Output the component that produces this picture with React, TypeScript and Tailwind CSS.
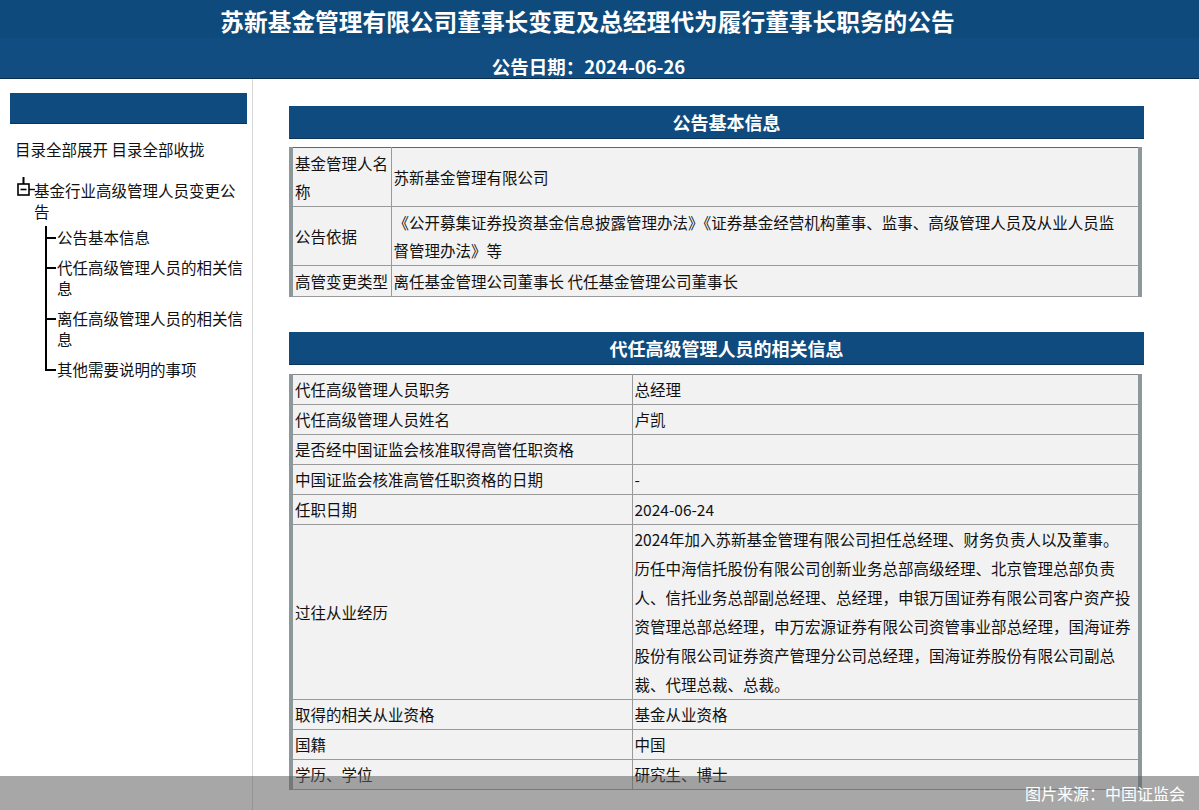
import React from "react";

const FONT = { fontFamily: '"Noto Sans CJK SC", "Noto Sans", sans-serif' };

function SectionHeader({ title }: { title: string }) {
  return (
    <div className="h-[33px] w-[855px] bg-[#0f4b7e] border-b border-[#0a3459] flex items-center justify-center pl-[20px] text-white font-bold text-[18px] leading-[24px]">
      {title}
    </div>
  );
}

function TreeIcon() {
  return (
    <svg width="18" height="20" viewBox="0 0 18 20" className="shrink-0">
      <line x1="6.5" y1="0" x2="6.5" y2="7" stroke="#000" strokeWidth="2" />
      <rect x="1" y="7" width="11" height="11" fill="#fff" stroke="#000" strokeWidth="1.6" />
      <line x1="3.5" y1="12.5" x2="9.5" y2="12.5" stroke="#000" strokeWidth="1.6" />
      <line x1="12" y1="12.5" x2="18" y2="12.5" stroke="#000" strokeWidth="1.4" />
    </svg>
  );
}

const children = [
  "公告基本信息",
  "代任高级管理人员的相关信息",
  "离任高级管理人员的相关信息",
  "其他需要说明的事项",
];

function Sidebar() {
  return (
    <div className="w-[253px] shrink-0 border-r border-[#d6d6d6] pt-[14px] text-[15.5px] text-[#111]">
      <div className="ml-[10px] w-[237px] h-[31px] bg-[#0f4b7e] border-b border-[#0a3459]" />
      <div className="ml-[15px] mt-[14px] leading-[22px]">目录全部展开 目录全部收拢</div>
      <div className="mt-[17px] ml-[17px] flex items-start">
        <TreeIcon />
        <div className="leading-[21px] mt-[3px] w-[212px] -ml-px">基金行业高级管理人员变更公告</div>
      </div>
      <div className="ml-[45px] mt-[4px] relative">
        <div className="absolute left-0 top-0 bottom-[9px] w-[2px] bg-black" />
        {children.map((c, i) => (
          <div key={i} className="relative pl-[12px] pt-px leading-[21px] mb-[8px] w-[200px]">
            <div className="absolute left-0 top-[11px] w-[11px] h-[1.5px] bg-black" />
            {c}
          </div>
        ))}
      </div>
    </div>
  );
}

const cell = "border border-[#9a9a9a] bg-[#f2f2f2] px-[2px] py-px align-middle text-left font-normal";

function Table1() {
  return (
    <table className="w-[853px] border-collapse border-l-[4px] border-r-[4px] border-l-[#8d989d] border-r-[#8d989d] border-t border-t-[#666] border-b border-b-[#9a9a9a] text-[15.5px] text-[#111] leading-[28px]">
      <tbody>
        <tr>
          <td className={cell + " w-[100px] border-t-[#666]"}>基金管理人名称</td>
          <td className={cell + " border-t-[#666]"}>苏新基金管理有限公司</td>
        </tr>
        <tr>
          <td className={cell + " border-t-[#555]"}>公告依据</td>
          <td className={cell + " border-t-[#555]"}>
            《公开募集证券投资基金信息披露管理办法》《证券基金经营机构董事、监事、高级管理人员及从业人员监
            <br />
            督管理办法》等
          </td>
        </tr>
        <tr>
          <td className={cell + " border-t-[#555] whitespace-nowrap"}>高管变更类型</td>
          <td className={cell + " border-t-[#555]"}>离任基金管理公司董事长 代任基金管理公司董事长</td>
        </tr>
      </tbody>
    </table>
  );
}

const rows2: [string, string][] = [
  ["代任高级管理人员职务", "总经理"],
  ["代任高级管理人员姓名", "卢凯"],
  ["是否经中国证监会核准取得高管任职资格", ""],
  ["中国证监会核准高管任职资格的日期", "-"],
  ["任职日期", "2024-06-24"],
];

const rows3: [string, string][] = [
  ["取得的相关从业资格", "基金从业资格"],
  ["国籍", "中国"],
  ["学历、学位", "研究生、博士"],
];

const history = [
  "2024年加入苏新基金管理有限公司担任总经理、财务负责人以及董事。",
  "历任中海信托股份有限公司创新业务总部高级经理、北京管理总部负责",
  "人、信托业务总部副总经理、总经理，申银万国证券有限公司客户资产投",
  "资管理总部总经理，申万宏源证券有限公司资管事业部总经理，国海证券",
  "股份有限公司证券资产管理分公司总经理，国海证券股份有限公司副总",
  "裁、代理总裁、总裁。",
];

function Table2() {
  return (
    <table className="w-[853px] border-collapse border-l-[4px] border-r-[4px] border-l-[#8d989d] border-r-[#8d989d] border-t border-t-[#666] text-[15.5px] text-[#111] leading-[27px]">
      <tbody>
        {rows2.map(([k, v], i) => (
          <tr key={i}>
            <td className={cell + " w-[341px] border-t-[#888]"}>{k}</td>
            <td className={cell + " border-t-[#888]"}>{v}</td>
          </tr>
        ))}
        <tr>
          <td className={cell + " border-t-[#888]"}>过往从业经历</td>
          <td className={cell + " border-t-[#888] leading-[29px] !py-0 whitespace-nowrap"}>
            {history.map((l, i) => (
              <div key={i}>{l}</div>
            ))}
          </td>
        </tr>
        {rows3.map(([k, v], i) => (
          <tr key={i}>
            <td className={cell + " border-t-[#888]"}>{k}</td>
            <td className={cell + " border-t-[#888]"}>{v}</td>
          </tr>
        ))}
      </tbody>
    </table>
  );
}

export default function App() {
  return (
    <div className="relative w-[1199px] h-[810px] overflow-hidden bg-white" style={FONT}>
      <div className="h-[79px] border-b border-[#0a2c4a]">
        <div className="h-[38px] bg-[#0f4a7c] flex items-end justify-center pb-[2px] pr-[24px]">
          <span className="text-white font-bold text-[23.7px] leading-[30px]">
            苏新基金管理有限公司董事长变更及总经理代为履行董事长职务的公告
          </span>
        </div>
        <div className="h-[40px] bg-[#114d80] flex items-center justify-center pt-[16px] pr-[22px]">
          <span className="text-white font-bold text-[18.5px] leading-[22px]">公告日期：2024-06-26</span>
        </div>
      </div>
      <div className="flex h-[731px]">
        <Sidebar />
        <div className="pl-[36px] pt-[27px]">
          <SectionHeader title="公告基本信息" />
          <div className="mt-[8px]">
            <Table1 />
          </div>
          <div className="mt-[35px]">
            <SectionHeader title="代任高级管理人员的相关信息" />
          </div>
          <div className="mt-[9px]">
            <Table2 />
          </div>
        </div>
      </div>
      <div className="absolute left-0 right-0 bottom-0 h-[34px] bg-[rgba(95,95,95,0.55)] flex items-center justify-end pr-[14px]">
        <span className="text-white text-[16px] leading-[22px]">图片来源：中国证监会</span>
      </div>
    </div>
  );
}
